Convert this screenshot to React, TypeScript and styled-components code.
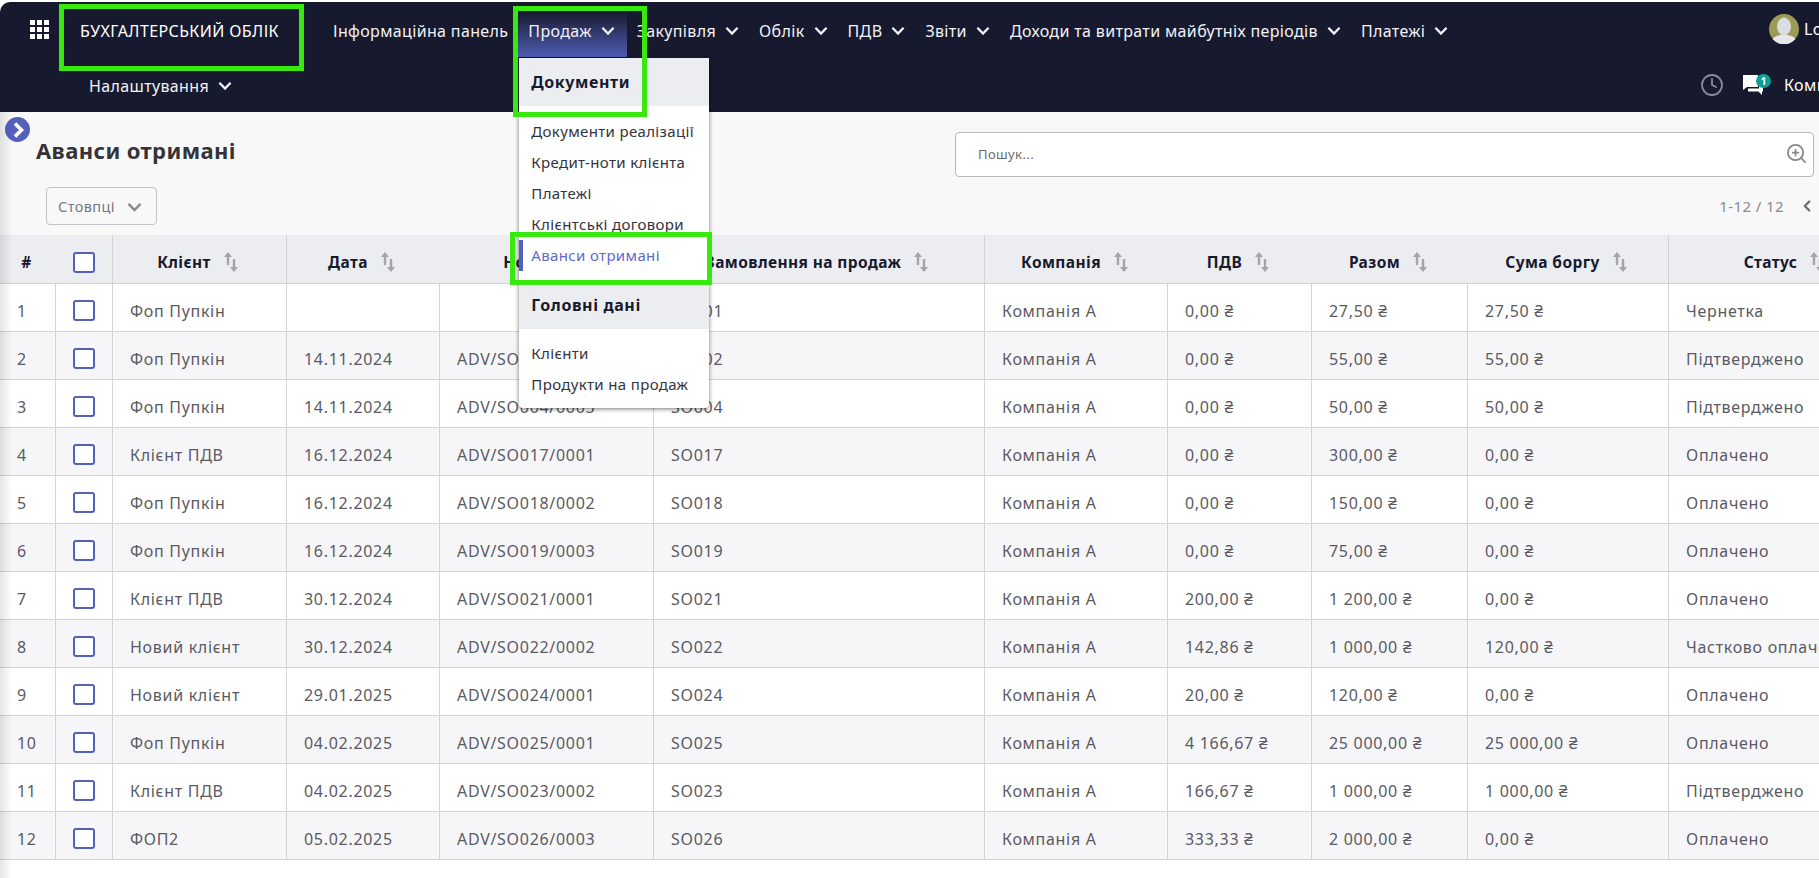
import { ChevronLeft, Clock, ZoomIn } from "lucide-react";
import styled, { createGlobalStyle } from "styled-components";

const menuItems = [
	"Закупівля",
	"Облік",
	"ПДВ",
	"Звіти",
	"Доходи та витрати майбутніх періодів",
	"Платежі",
	"Налаштування",
];

const columns = [
	{ title: "#", width: 56, plain: true, line: false },
	{ title: "", width: 57, check: true, line: true },
	{ title: "Клієнт", width: 174, line: true },
	{ title: "Дата", width: 153, line: false },
	{ title: "Номер", width: 214, line: true },
	{ title: "Замовлення на продаж", width: 331, line: true },
	{ title: "Компанія", width: 183, line: false },
	{ title: "ПДВ", width: 144, line: false },
	{ title: "Разом", width: 156, line: false },
	{ title: "Сума боргу", width: 201, line: true },
	{ title: "Статус", width: 234, line: false },
];

const rows = [
	["Фоп Пупкін", "", "", "SO001", "0,00 ₴", "27,50 ₴", "27,50 ₴", "Чернетка"],
	["Фоп Пупкін", "14.11.2024", "ADV/SO002/0002", "SO002", "0,00 ₴", "55,00 ₴", "55,00 ₴", "Підтверджено"],
	["Фоп Пупкін", "14.11.2024", "ADV/SO004/0003", "SO004", "0,00 ₴", "50,00 ₴", "50,00 ₴", "Підтверджено"],
	["Клієнт ПДВ", "16.12.2024", "ADV/SO017/0001", "SO017", "0,00 ₴", "300,00 ₴", "0,00 ₴", "Оплачено"],
	["Фоп Пупкін", "16.12.2024", "ADV/SO018/0002", "SO018", "0,00 ₴", "150,00 ₴", "0,00 ₴", "Оплачено"],
	["Фоп Пупкін", "16.12.2024", "ADV/SO019/0003", "SO019", "0,00 ₴", "75,00 ₴", "0,00 ₴", "Оплачено"],
	["Клієнт ПДВ", "30.12.2024", "ADV/SO021/0001", "SO021", "200,00 ₴", "1 200,00 ₴", "0,00 ₴", "Оплачено"],
	["Новий клієнт", "30.12.2024", "ADV/SO022/0002", "SO022", "142,86 ₴", "1 000,00 ₴", "120,00 ₴", "Частково оплачено"],
	["Новий клієнт", "29.01.2025", "ADV/SO024/0001", "SO024", "20,00 ₴", "120,00 ₴", "0,00 ₴", "Оплачено"],
	["Фоп Пупкін", "04.02.2025", "ADV/SO025/0001", "SO025", "4 166,67 ₴", "25 000,00 ₴", "25 000,00 ₴", "Оплачено"],
	["Клієнт ПДВ", "04.02.2025", "ADV/SO023/0002", "SO023", "166,67 ₴", "1 000,00 ₴", "1 000,00 ₴", "Підтверджено"],
	["ФОП2", "05.02.2025", "ADV/SO026/0003", "SO026", "333,33 ₴", "2 000,00 ₴", "0,00 ₴", "Оплачено"],
];

function Chevron({ size = 14 }: { size?: number }) {
	return (
		<svg width={size} height={size * 0.67} viewBox="0 0 15 10" fill="none">
			<path d="M1.5 1.8 L7.5 8 L13.5 1.8" stroke="currentColor" strokeWidth="2.5" />
		</svg>
	);
}

function SortIcon() {
	return (
		<svg width="16" height="20" viewBox="0 0 16 20" fill="#a4a4ac">
			<path d="M5 0 L9 5 H6.2 V13 H3.8 V5 H1 Z" />
			<path d="M11 20 L15 15 H12.2 V7 H9.8 V15 H7 Z" />
		</svg>
	);
}

function AppsIcon() {
	return (
		<svg width="19" height="19" viewBox="0 0 19 19" fill="#fff">
			{[0, 7, 14].map((y) =>
				[0, 7, 14].map((x) => <rect key={`${x}-${y}`} x={x} y={y} width="5" height="5" />),
			)}
		</svg>
	);
}

function Avatar() {
	return (
		<svg width="30" height="30" viewBox="0 0 30 30">
			<circle cx="15" cy="15" r="15" fill="#9c9a58" />
			<ellipse cx="15" cy="12.5" rx="7" ry="9" fill="#dcdde0" />
			<path d="M3.5 25 C7 21 11 21 15 21 C19 21 23 21 26.5 25 A15 15 0 0 1 3.5 25 Z" fill="#e8e8ea" />
		</svg>
	);
}

function ChatIcon() {
	return (
		<svg width="21" height="20" viewBox="0 0 21 20" fill="#fff">
			<path d="M0 0 H15 V12 H4 L0 15 Z" />
			<path d="M5 13.5 H16 V10 H20 V16.5 H19 V20 L15.5 16.5 H5 Z" />
		</svg>
	);
}

function App() {
	return (
		<>
			<GlobalStyle />
			<Page>
				<Header>
					<AppsSlot>
						<AppsIcon />
					</AppsSlot>
					<Nav>
						<Brand>БУХГАЛТЕРСЬКИЙ ОБЛІК</Brand>
						<NavItem>Інформаційна панель</NavItem>
						<NavItem $active>
							Продаж
							<Chevron />
							<Dropdown>
								<MenuHead>Документи</MenuHead>
								<MenuList>
									<MenuItem>Документи реалізації</MenuItem>
									<MenuItem>Кредит-ноти клієнта</MenuItem>
									<MenuItem>Платежі</MenuItem>
									<MenuItem>Клієнтські договори</MenuItem>
									<MenuItem $active>Аванси отримані</MenuItem>
								</MenuList>
								<MenuHead>Головні дані</MenuHead>
								<MenuList>
									<MenuItem>Клієнти</MenuItem>
									<MenuItem>Продукти на продаж</MenuItem>
								</MenuList>
							</Dropdown>
						</NavItem>
						{menuItems.map((item) => (
							<NavItem key={item}>
								{item}
								<Chevron />
							</NavItem>
						))}
					</Nav>
					<UserArea>
						<UserRow>
							<Avatar />
							<span>Loren Admin</span>
						</UserRow>
						<ToolsRow>
							<Clock size={24} color="#8a8b94" strokeWidth={1.8} />
							<ChatWrap>
								<ChatIcon />
								<ChatBadge>1</ChatBadge>
							</ChatWrap>
							<CompanyName>Компанія А</CompanyName>
						</ToolsRow>
					</UserArea>
				</Header>

				<Controls>
					<SideToggle>
						<svg width="14" height="16" viewBox="0 0 14 16" fill="none">
							<path d="M4 1.5 L10.5 8 L4 14.5" stroke="#fff" strokeWidth="3.6" />
						</svg>
					</SideToggle>
					<TitleRow>
						<Title>Аванси отримані</Title>
						<SearchBox>
							<SearchText>Пошук...</SearchText>
							<ZoomIn size={23} color="#85858c" strokeWidth={1.8} />
						</SearchBox>
					</TitleRow>
					<ActionRow>
						<ColumnsButton>
							Стовпці
							<ButtonArrow>
								<Chevron size={15} />
							</ButtonArrow>
						</ColumnsButton>
						<Pager>
							1-12 / 12
							<ChevronLeft size={18} color="#6f6f76" strokeWidth={3.2} />
						</Pager>
					</ActionRow>
				</Controls>

				<Table>
					<colgroup>
						{columns.map((col, i) => (
							<col key={i} style={{ width: col.width }} />
						))}
					</colgroup>
					<thead>
						<tr>
							{columns.map((col, i) => (
								<HeadCell key={i} $line={col.line}>
									{col.check ? (
										<CheckBox $head />
									) : (
										<HeadInner>
											{col.title}
											{!col.plain && <SortIcon />}
										</HeadInner>
									)}
								</HeadCell>
							))}
						</tr>
					</thead>
					<tbody>
						{rows.map((row, i) => (
							<Row key={i} $even={i % 2 === 1}>
								<Cell>{i + 1}</Cell>
								<Cell>
									<CheckBox />
								</Cell>
								{row.slice(0, 4).map((value, j) => (
									<Cell key={j}>{value}</Cell>
								))}
								<Cell>Компанія А</Cell>
								{row.slice(4).map((value, j) => (
									<Cell key={j}>{value}</Cell>
								))}
							</Row>
						))}
					</tbody>
				</Table>

				<EdgeShade />
				<Marker $left={59} $top={4} $width={245} $height={67} />
				<Marker $left={513} $top={6} $width={134} $height={111} />
				<Marker $left={510} $top={232} $width={202} $height={53} />
			</Page>
		</>
	);
}

const GlobalStyle = createGlobalStyle`
	html, body {
		margin: 0;
		padding: 0;
		height: 100%;
		background: #fff;
		overflow: hidden;
	}
	body {
		font-family: "Noto Sans", "Open Sans", sans-serif;
		letter-spacing: 0.4px;
	}
`;

const Page = styled.div`
	position: relative;
	width: 1819px;
	height: 878px;
	padding-top: 2px;
	box-sizing: border-box;
	overflow: hidden;
`;

const Header = styled.header`
	display: flex;
	height: 110px;
	background-color: #171a2e;
	border-top-left-radius: 10px;
	color: #fff;
`;

const AppsSlot = styled.div`
	flex: none;
	width: 79px;
	box-sizing: border-box;
	padding: 18px 0 0 30px;
`;

const Nav = styled.nav`
	flex: none;
	width: 1421px;
	display: flex;
	flex-wrap: wrap;
	align-content: flex-start;
	padding-top: 9px;
	row-gap: 9px;
`;

const Brand = styled.div`
	width: 244px;
	height: 46px;
	box-sizing: border-box;
	padding: 0 0 6px 1px;
	display: flex;
	align-items: center;
	font-size: 16px;
`;

const NavItem = styled.div<{ $active?: boolean }>`
	position: relative;
	height: 46px;
	box-sizing: border-box;
	padding: 0 ${(p) => (p.$active ? "12px" : "10px")} 7px 10px;
	display: flex;
	align-items: center;
	gap: 9px;
	font-size: 16px;
	letter-spacing: 0.35px;
	color: #f2f2f6;
	background: ${(p) => (p.$active ? "linear-gradient(#171a2e, #4f5cb3)" : "none")};
`;

const Dropdown = styled.div`
	position: absolute;
	top: 47px;
	left: 1px;
	z-index: 5;
	width: 190px;
	background-color: #fff;
	border-radius: 0 0 4px 4px;
	box-shadow: 0 1px 4px rgba(0, 0, 0, 0.55);
	padding-bottom: 9px;
`;

const MenuHead = styled.div`
	height: 48px;
	padding-left: 12px;
	display: flex;
	align-items: center;
	background-color: #ecedf0;
	color: #171a2e;
	font-size: 16px;
	font-weight: 700;
	letter-spacing: 0.6px;
`;

const MenuList = styled.div`
	padding: 9px 0 10px;

	&:last-child {
		padding: 8px 0 0;
	}
`;

const MenuItem = styled.div<{ $active?: boolean }>`
	height: 31.2px;
	padding-left: ${(p) => (p.$active ? "8px" : "12px")};
	display: flex;
	align-items: center;
	font-size: 15px;
	color: ${(p) => (p.$active ? "#5f6bc9" : "#33333d")};
	border-left: ${(p) => (p.$active ? "4px solid #5560bb" : "none")};
`;

const UserArea = styled.div`
	flex: none;
	width: 320px;
	margin-left: 200px;
	display: flex;
	flex-direction: column;
`;

const UserRow = styled.div`
	height: 30px;
	margin: 12px 0 0 69px;
	display: flex;
	align-items: center;
	gap: 5px;
	font-size: 16px;
	white-space: nowrap;
`;

const ToolsRow = styled.div`
	margin-top: 29px;
	display: flex;
	align-items: center;
	font-size: 16px;
	white-space: nowrap;
`;

const ChatWrap = styled.div`
	position: relative;
	margin-left: 19px;
	height: 20px;
`;

const ChatBadge = styled.span`
	position: absolute;
	top: -1px;
	left: 13px;
	width: 15px;
	height: 14px;
	border-radius: 50%;
	background-color: #0f9f98;
	font-size: 10px;
	font-weight: 700;
	line-height: 14px;
	text-align: center;
	color: #fff;
	letter-spacing: 0;
`;

const CompanyName = styled.span`
	margin-left: 20px;
`;

const Controls = styled.div`
	position: relative;
	height: 123px;
	box-sizing: border-box;
	padding-top: 20px;
	background-color: #f8f8f9;
`;

const SideToggle = styled.div`
	position: absolute;
	top: 5px;
	left: 5px;
	width: 25px;
	height: 25px;
	border-radius: 50%;
	background-color: #5560bb;
	display: flex;
	align-items: center;
	justify-content: center;
`;

const TitleRow = styled.div`
	display: flex;
	align-items: center;
	justify-content: space-between;
	height: 45px;
	padding: 0 5px 0 36px;
`;

const Title = styled.h1`
	margin: 0 0 10px;
	font-size: 22px;
	font-weight: 700;
	color: #333338;
`;

const SearchBox = styled.div`
	width: 859px;
	height: 45px;
	box-sizing: border-box;
	padding: 0 5px 2px 22px;
	display: flex;
	align-items: center;
	justify-content: space-between;
	background-color: #fff;
	border: 1px solid #b9b9bd;
	border-radius: 4px;
`;

const SearchText = styled.span`
	font-size: 13px;
	color: #6a6a70;
`;

const ActionRow = styled.div`
	display: flex;
	align-items: center;
	justify-content: space-between;
	margin-top: 10px;
	padding: 0 3px 0 46px;
`;

const ColumnsButton = styled.div`
	width: 111px;
	height: 38px;
	box-sizing: border-box;
	padding: 0 14px 0 11px;
	display: flex;
	align-items: center;
	justify-content: space-between;
	border: 1px solid #c3c3c9;
	border-radius: 4px;
	font-size: 14.5px;
	color: #77777e;
`;

const ButtonArrow = styled.span`
	display: flex;
	padding-top: 3px;
	color: #8b8b90;
`;

const Pager = styled.div`
	display: flex;
	align-items: center;
	gap: 14px;
	font-size: 15px;
	color: #8a8a90;
`;

const Table = styled.table`
	width: 1903px;
	table-layout: fixed;
	border-collapse: separate;
	border-spacing: 0;
	color: #5a5a62;
	font-size: 16px;
	letter-spacing: 0.7px;
`;

const HeadCell = styled.th<{ $line?: boolean }>`
	height: 49px;
	box-sizing: border-box;
	padding: 6px 0 0;
	background-color: #ecedf0;
	border-bottom: 1px solid #d3d3d6;
	border-right: ${(p) => (p.$line ? "1px solid #d3d3d6" : "none")};
	color: #171a2e;
	font-size: 15.5px;
	font-weight: 700;
	letter-spacing: 0.4px;
	text-align: center;
`;

const HeadInner = styled.div`
	display: flex;
	align-items: center;
	justify-content: center;
	gap: 12px;
	padding-right: 3px;
	white-space: nowrap;
`;

const Row = styled.tr<{ $even: boolean }>`
	background-color: ${(p) => (p.$even ? "#f6f6f9" : "#fff")};
`;

const Cell = styled.td`
	height: 48px;
	box-sizing: border-box;
	padding: 6px 0 0 17px;
	border-bottom: 1px solid #d3d3d6;
	border-right: 1px solid #d3d3d6;
	white-space: nowrap;
	overflow: hidden;
`;

const CheckBox = styled.div<{ $head?: boolean }>`
	width: 22px;
	height: 21px;
	box-sizing: border-box;
	margin: ${(p) => (p.$head ? "0 auto" : "0")};
	background-color: #fff;
	border: 2px solid #5560bb;
	border-radius: 3px;
`;

const EdgeShade = styled.div`
	position: absolute;
	top: 112px;
	bottom: 0;
	left: 0;
	width: 12px;
	background: linear-gradient(90deg, rgba(0, 0, 0, 0.1), rgba(0, 0, 0, 0));
	pointer-events: none;
`;

const Marker = styled.div<{ $left: number; $top: number; $width: number; $height: number }>`
	position: absolute;
	left: ${(p) => p.$left}px;
	top: ${(p) => p.$top}px;
	width: ${(p) => p.$width}px;
	height: ${(p) => p.$height}px;
	box-sizing: border-box;
	border: 5px solid #37e90f;
	z-index: 10;
	pointer-events: none;
`;

export default App;
